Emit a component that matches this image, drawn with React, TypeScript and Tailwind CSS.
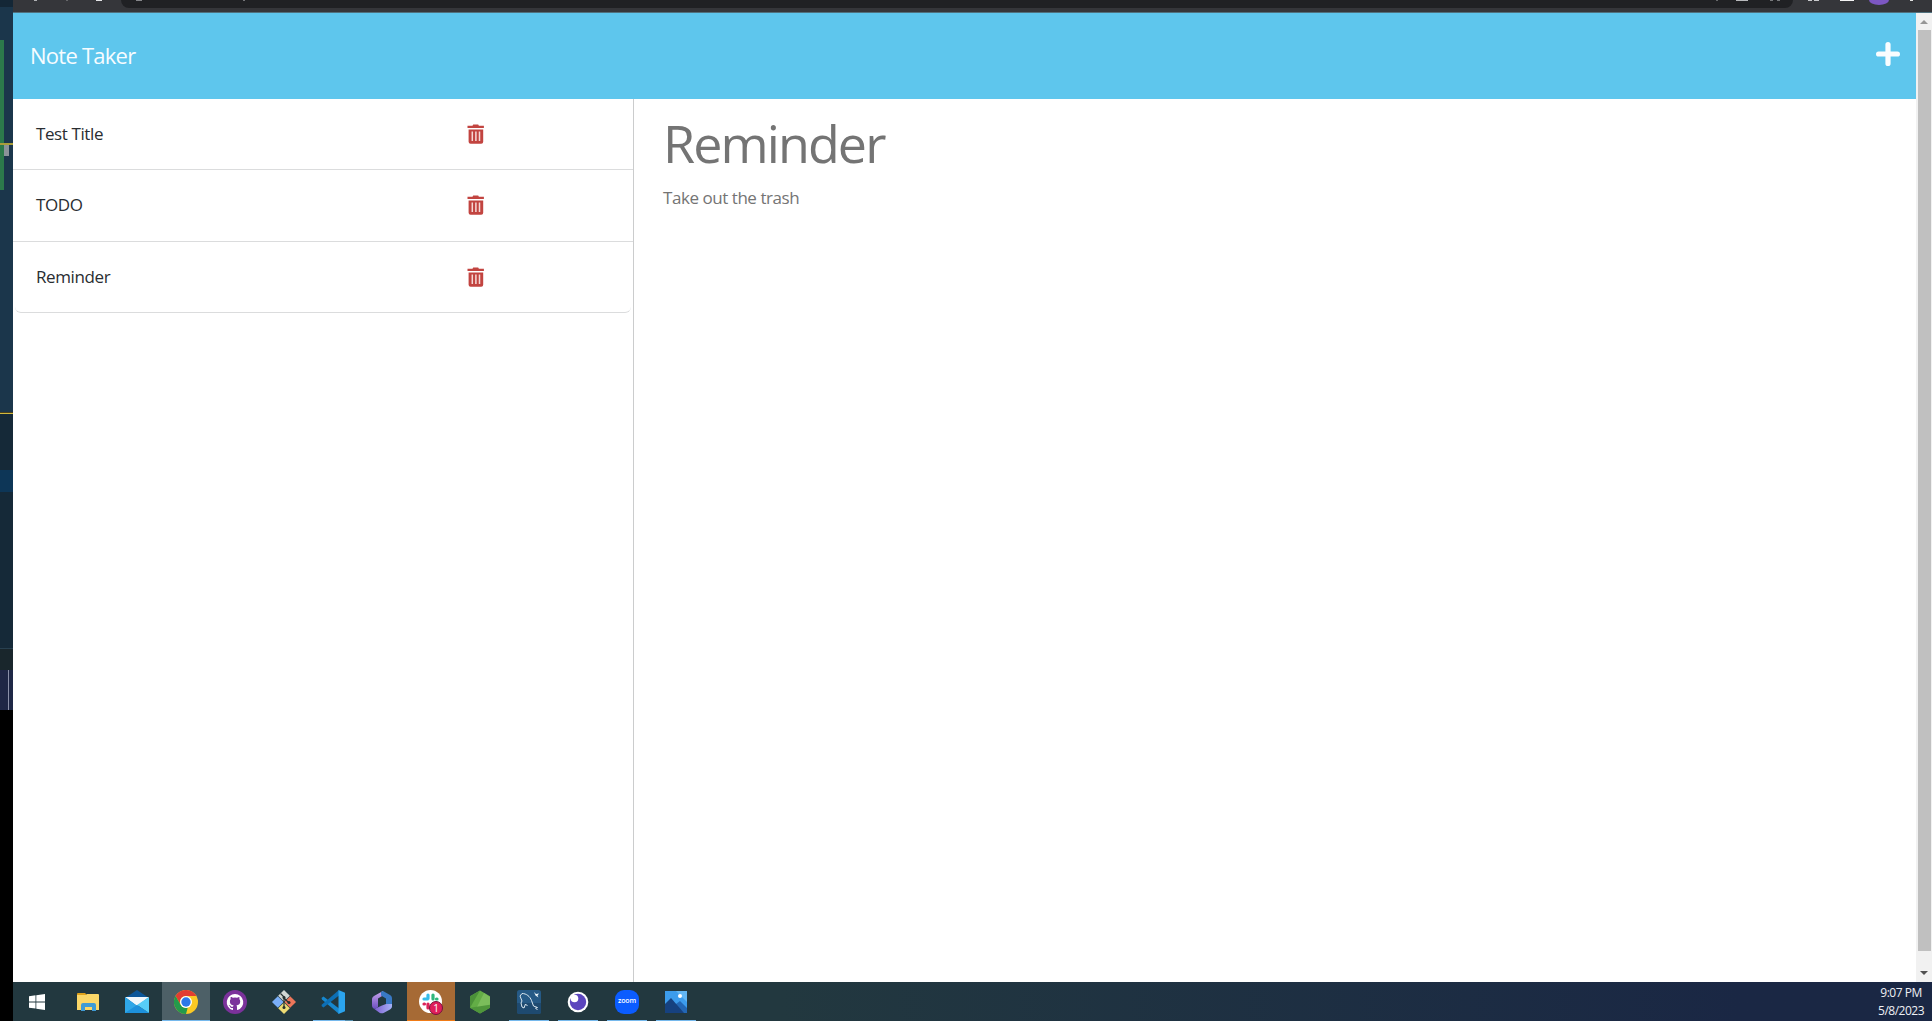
import React from "react";

const notes = [
  { title: "Test Title", row: "h-[71px] pl-[23px]" },
  { title: "TODO", row: "h-[72px] pl-[23px] pb-px" },
  { title: "Reminder", row: "h-[71px] mx-0.5 pl-[21px] rounded-b-[6px]" },
];

function Trash() {
  return (
    <svg className="block h-5 w-[18px]" viewBox="0 0 18 20">
      <path d="M0.5 1.7h5L6.2.5h5l.7 1.2h5v2.2H.5zM1.6 5.4h14.6v12.4a2 2 0 0 1-2 2H3.6a2 2 0 0 1-2-2z" fill="#c24440" />
      <path d="M5.3 7.5v9.6M8.9 7.5v9.6M12.5 7.5v9.6" stroke="#f6d9d6" strokeWidth="1.5" />
    </svg>
  );
}

function Plus() {
  return (
    <svg className="block h-6 w-6" viewBox="0 0 24 24">
      <path d="M12 2.6v18.8M2.6 12h18.8" stroke="#fafdff" strokeWidth="5.2" strokeLinecap="round" />
    </svg>
  );
}

const icons: Record<string, React.ReactNode> = {
  files: (
    <>
      <path d="M1 4a1 1 0 0 1 1-1h7l2 2H1z" fill="#e0a21b" />
      <path d="M1 5h9l1-1h11a1 1 0 0 1 1 1v15H1z" fill="#fbd768" />
      <path d="M5 21v-6a2 2 0 0 1 2-2h11a2 2 0 0 1 2 2v6h-4v-4H9v4z" fill="#3f9bd6" />
    </>
  ),
  mail: (
    <>
      <path d="M0 8 12 0l12 8v6H0z" fill="#0b5699" />
      <path d="M0 7h24L12 16z" fill="#f1f7fb" />
      <path d="M0 7v16h24L11 15z" fill="#2fa7e8" />
      <path d="M24 7v16L12 15z" fill="#57cdf7" />
      <path d="M0 23 12 15l12 8z" fill="#1d91dc" />
    </>
  ),
  chrome: (
    <>
      <circle cx="12" cy="12" r="12" fill="#fbc924" />
      <path d="M1.6 6A12 12 0 0 1 22.4 6H12a6 6 0 0 0-5.2 9z" fill="#e23d32" />
      <path d="M1.6 6 6.8 15a6 6 0 0 0 6.9 2.8L12 24A12 12 0 0 1 1.6 6z" fill="#249a4b" />
      <circle cx="12" cy="12" r="6" fill="#fff" />
      <circle cx="12" cy="12" r="4.7" fill="#2d78e8" />
    </>
  ),
  github: (
    <>
      <circle cx="12" cy="12" r="12" fill="#7b329b" />
      <path d="M12 4a8.2 8.2 0 0 0-2.6 16c.5.1.6-.2.6-.5v-1.6c-2.3.5-2.8-1-2.8-1-.5-1.3-1-1.5-1-1.5-.8-.5 0-.5 0-.5.9.1 1.4 1 1.4 1 .8 1.3 2 1 2.5.7 0-.6.3-1 .6-1.2-2-.2-3.8-1-3.8-4.1 0-1 .3-1.6.8-2.2-.2-.6-.3-1.3 0-2.2 1-.1 2 .6 2.3.9a8 8 0 0 1 4 0c1-.7 2-.9 2.3-.9.3.9.2 1.6 0 2.2.6.6.9 1.3.9 2.2 0 3.2-1.9 3.9-3.8 4.1.4.3.6.9.6 1.6v2.5c0 .3.2.6.6.5A8.2 8.2 0 0 0 12 4z" fill="#fff" />
    </>
  ),
  git: (
    <>
      <path d="M12 0L17.8 5.8L12 11.6L6.2 5.8Z" fill="#d2d7d3" />
      <path d="M5.8 6.2L11.6 12L5.8 17.8L0 12Z" fill="#7aaef7" />
      <path d="M18.2 6.2L24 12L18.2 17.8L12.4 12Z" fill="#ed765a" />
      <path d="M12 12.4L17.8 18.2L12 24L6.2 18.2Z" fill="#eddb74" />
      <path d="M8.5 3.5L12 7V18M12 8L16.5 12.5" stroke="#26302f" strokeWidth="1.2" fill="none" />
      <circle cx="12" cy="7.5" r="1.5" fill="#26302f" />
      <circle cx="17" cy="12.5" r="1.5" fill="#26302f" />
      <circle cx="12" cy="17.5" r="1.5" fill="#26302f" />
    </>
  ),
  vscode: (
    <>
      <path d="M.5 8l2-1.6L18 18.5V24L1 9.5z" fill="#1687ce" />
      <path d="M.5 16l2 1.6L18 5.5V0L1 14.5z" fill="#0d6fb5" />
      <path d="M17.5 0L24 2.7v18.6L17.5 24z" fill="#2ba4ee" />
    </>
  ),
  office: (
    <>
      <defs>
        <linearGradient id="officeA" x2="0" y2="1">
          <stop stopColor="#caa6ee" />
          <stop offset="1" stopColor="#6d4fc0" />
        </linearGradient>
        <linearGradient id="officeB">
          <stop stopColor="#7a57cc" />
          <stop offset="1" stopColor="#a7b3f7" />
        </linearGradient>
      </defs>
      <path d="M13 1L4 6C2.7 6.800 2 8 2 9.500V15.500C2 18.500 4.500 19.500 6.500 18L8 17V8.500L13 5.500Z" fill="url(#officeA)" />
      <path d="M11 2L13 1L20 5C21.500 6 22 7 22 8.500V15.500C22 16.500 21.600 17.500 21 18L16 15V8.500L11 5.500Z" fill="#3979c5" />
      <path d="M3 18C4 19 5.500 18.800 6.500 18L12 15.500L16 14H22V16C22 17.500 21.300 18.600 20 19.400L14 22.700C12.500 23.500 11 23.500 9.500 22.700Z" fill="url(#officeB)" />
    </>
  ),
  slack: (
    <>
      <circle cx="11.5" cy="11.5" r="11.5" fill="#fff" />
      <g strokeWidth="3.2" strokeLinecap="round" fill="none">
        <path d="M9 5v3.5M5 9h3.5" stroke="#36bce8" />
        <path d="M14 5v4M18 9h-.5" stroke="#2fb67c" />
        <path d="M5 14h.5M9 14v4" stroke="#dc2258" />
        <path d="M14 14h4M14 18h.2" stroke="#e8b02f" />
      </g>
    </>
  ),
  node: (
    <>
      <path d="M12 .5l10 5.8v11.500L12 23.500 2 17.800V6.300z" fill="#63ad46" />
      <path d="M12 .5L2 6.300v11.500z" fill="#4b9139" />
      <path d="M16 3l6 4v10.500l-15 3.200z" fill="#7bbd5b" />
      <path d="M2 17.800l20-3v3L12 23.500z" fill="#4f963b" />
    </>
  ),
  mysql: (
    <>
      <rect width="24" height="24" rx="2.5" fill="#265a86" />
      <path d="M0 13h24v8.500a2.500 2.500 0 0 1-2.500 2.500h-19A2.500 2.500 0 0 1 0 21.500z" fill="#1e4a70" />
      <path d="M7 18l-2-1-1-4 1-2-2-5 2-2.500c4.500 0 8 3 9.500 7l2 5.500 4 1.500-2 .5 2 2M7 18l1.500-4 2 2" fill="none" stroke="#dbe8f0" strokeWidth="1" />
      <path d="M17 2l2 2 3-.5-1.500 2 1 2-3-2z" fill="#edf6fa" />
    </>
  ),
  insomnia: (
    <>
      <circle cx="12" cy="12" r="10.3" fill="#fff" />
      <circle cx="12" cy="12" r="8.2" fill="#5b45be" />
      <circle cx="8.5" cy="8.5" r="3.8" fill="#fff" />
    </>
  ),
  photos: (
    <>
      <rect x="1" y="1" width="22" height="22" fill="#3c9cec" />
      <path d="M12 1h11v11z" fill="#62b6f3" />
      <path d="M12 14l4-3 7 7v5H12z" fill="#2367b5" />
      <path d="M1 14L7 8l13 15H1z" fill="#16417f" />
      <circle cx="16" cy="6" r="2" fill="#fff" />
    </>
  ),
};

const apps = [
  "files", "mail", "chrome", "github", "git", "vscode", "office",
  "slack", "node", "mysql", "insomnia", "zoom", "photos",
];
const running = ["mysql", "insomnia", "zoom", "photos"];

function AppIcon({ name }: { name: string }) {
  if (name === "zoom") {
    return (
      <div className="flex h-6 w-6 items-center justify-center rounded-[9px] bg-[#0b5cff] pb-0.5 text-[7px] font-semibold leading-none text-white">
        <span className="tracking-[-0.2px]">zoom</span>
      </div>
    );
  }
  return (
    <div className="relative h-6 w-6">
      <svg className="block h-6 w-6" viewBox="0 0 24 24">{icons[name]}</svg>
      {name === "slack" && (
        <span className="absolute top-[11px] left-[10px] flex h-[14px] w-[14px] items-center justify-center rounded-full border border-[#73133b] bg-[#e01e5a] text-[10px] leading-none text-white">
          1
        </span>
      )}
    </div>
  );
}

function TaskButton({ name }: { name: string }) {
  const tone =
    name === "chrome" ? "bg-[#4d6067]" : name === "slack" ? "bg-[#a66a35]" : "";
  return (
    <div className={`flex h-full w-12 flex-col items-center ${tone}`}>
      <div className="flex flex-1 items-center pt-px">
        <AppIcon name={name} />
      </div>
      {name === "chrome" && <div className="h-px w-full bg-[#76b9ed]" />}
      {name === "slack" && <div className="h-px w-full bg-[#f07b16]" />}
      {name === "vscode" && (
        <div className="flex h-px w-10">
          <div className="w-8 bg-[#76b9ed]" />
          <div className="flex-1 bg-[#568fae]" />
        </div>
      )}
      {running.includes(name) && <div className="h-px w-10 bg-[#76b9ed]" />}
      {!["chrome", "slack", "vscode", ...running].includes(name) && <div className="h-px" />}
    </div>
  );
}

function EditorEdge() {
  return (
    <div className="flex w-[13px] shrink-0 flex-col bg-black">
      <div className="h-[7px] bg-[#142736]" />
      <div className="h-[33px] bg-[#1b364b]" />
      <div className="flex h-[103px] bg-[#1b364b]"><div className="w-1 bg-[#2c794b]" /></div>
      <div className="h-0.5 bg-[#a99c38]" />
      <div className="flex h-[45px] bg-[#1b364b]">
        <div className="w-1 bg-[#2c794b]" />
        <div className="h-[11px] w-[5px] bg-[#8b9299]" />
      </div>
      <div className="h-[222px] bg-[#1b364b]" />
      <div className="h-px bg-[#4a3f1a]" />
      <div className="h-px bg-[#d1b93e]" />
      <div className="h-14 bg-[#152938]" />
      <div className="h-[22px] bg-[#0d3657]" />
      <div className="h-[156px] bg-[#152938]" />
      <div className="h-px bg-[#284050]" />
      <div className="h-[21px] bg-[#19262c]" />
      <div className="flex h-10 bg-[#1e2746]"><div className="ml-2 w-px bg-[#8a91a9]" /></div>
    </div>
  );
}

function BrowserEdge() {
  return (
    <div className="flex h-[13px] shrink-0 flex-col bg-[#35363a]">
      <div className="flex flex-1 items-start">
        <div className="ml-[21px] h-px w-[3px] bg-[#b0b1b4]" />
        <div className="ml-[29px] h-px w-0.5 bg-[#66676a]" />
        <div className="ml-7 h-px w-[6px] bg-[#e4e5e8]" />
        <div className="ml-[19px] flex h-2 w-[1672px] items-start rounded-b-lg bg-[#202124]">
          <div className="ml-[15px] h-px w-[6px] bg-[#85868a]" />
          <div className="ml-[101px] h-px w-0.5 bg-[#737478]" />
          <div className="mr-[18px] ml-auto h-px w-0.5 bg-[#66686b]" />
          <div className="mr-[22px] h-px w-3 bg-[#b8b9bc]" />
          <div className="mr-[13px] flex h-px w-[10px] justify-between">
            <div className="w-[3px] bg-[#77787b]" />
            <div className="w-[3px] bg-[#77787b]" />
          </div>
        </div>
        <div className="ml-[15px] flex h-px w-[11px] justify-between">
          <div className="w-1 bg-[#c8c9cc]" />
          <div className="w-[5px] bg-[#c8c9cc]" />
        </div>
        <div className="ml-[21px] h-px w-[14px] bg-[#f4f4f4]" />
        <div className="ml-[15px] h-[5px] w-5 rounded-b-[50%_100%] bg-[#7c57c2]" />
        <div className="ml-[21px] h-px w-[3px] bg-[#e2e2e2]" />
      </div>
      <div className="h-px bg-[#50717e]" />
    </div>
  );
}

export default function App() {
  return (
    <div className="flex h-[1021px] w-[1932px] overflow-hidden bg-white font-['Open_Sans',sans-serif] text-[#292d31]">
      <EditorEdge />
      <div className="flex min-w-0 flex-1 flex-col">
        <BrowserEdge />
        <div className="flex min-h-0 flex-1">
          <div className="flex min-w-0 flex-1 flex-col">
            <header className="flex h-[86px] shrink-0 items-center justify-between bg-[#5ec6ed] pr-4 pl-[17px]">
              <h1 className="pb-0.5 text-[22px] leading-8 tracking-[-0.75px] text-[#f7fcff]">Note Taker</h1>
              <button className="mb-1" aria-label="New note"><Plus /></button>
            </header>
            <div className="flex min-h-0 flex-1">
              <aside className="w-[621px] border-r border-[#cbcccd]">
                <ul>
                  {notes.map(({ title, row }) => (
                    <li key={title} className={`flex items-center border-b border-[#dbdcdd] ${row}`}>
                      <span className="w-[431px] text-[17px] leading-7 tracking-[-0.4px]">{title}</span>
                      <button aria-label="Delete note"><Trash /></button>
                    </li>
                  ))}
                </ul>
              </aside>
              <main className="pt-[9px] pl-[29px] text-[#747474]">
                <h2 className="text-[52px] leading-[70px] tracking-[-1.9px]">Reminder</h2>
                <p className="mt-[6px] text-[17px] leading-7 tracking-[-0.45px]">Take out the trash</p>
              </main>
            </div>
          </div>
          <div className="flex w-4 flex-col items-center bg-[#f1f1f1]">
            <div className="flex h-[17px] items-center"><div className="border-x-4 border-b-4 border-x-transparent border-b-[#969696]" /></div>
            <div className="ml-px h-[921px] w-[13px] bg-[#c0c0c0]" />
            <div className="mt-[12px] flex flex-1 items-center"><div className="border-x-4 border-t-4 border-x-transparent border-t-[#505050]" /></div>
          </div>
        </div>
        <footer className="flex h-[39px] shrink-0 bg-linear-to-r from-[#22383f] from-40% to-[#1a2744] to-90%">
          <div className="flex w-[51px] items-center pl-4">
            <svg className="h-4 w-4" viewBox="0 0 16 16">
              <path d="M0 2.2l6.5-.9v6.2H0zM7.3 1.2L16 0v7.5H7.3zM0 8.4h6.5v6.2L0 13.7zM7.3 8.4H16V16l-8.7-1.3z" fill="#fff" />
            </svg>
          </div>
          <div className="flex gap-px">{apps.map((name) => <TaskButton key={name} name={name} />)}</div>
          <div className="ml-auto flex flex-col items-center pt-0.5 pr-2 text-[12px] leading-[18px] tracking-[-0.5px] text-[#eef0f4]">
            <span>9:07 PM</span>
            <span>5/8/2023</span>
          </div>
        </footer>
      </div>
    </div>
  );
}
